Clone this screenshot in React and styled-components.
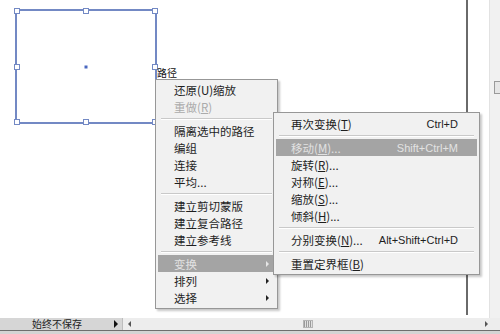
import React from 'react'
import styled, { createGlobalStyle } from 'styled-components'

const Global = createGlobalStyle`
  html, body { margin: 0; padding: 0; background: #fff; }
  body { font-family: "Noto Sans CJK SC", "Liberation Sans", sans-serif; }
`

const Page = styled.div`
  width: 500px;
  height: 334px;
  overflow: hidden;
  display: flex;
  flex-direction: column;
  background: #fff;
`

const Workspace = styled.div`
  position: relative;
  height: 318px;
  display: flex;
`

const Artboard = styled.div`
  position: relative;
  width: 466px;
  height: 315px;
  border-right: 2px solid #6a6a6a;
`

const Gutter = styled.div`
  flex: 1;
  background: #fff;
`

const RightStrip = styled.div`
  width: 10px;
  background: #f1f1f1;
  border-left: 1px solid #e2e2e2;
  display: flex;
  flex-direction: column;
  padding-top: 81px;
`

const StripBox = styled.div`
  width: 6px;
  height: 11px;
  margin-left: 4px;
  border: 1px solid #9a9a9a;
  border-right: none;
  background: #e6e6e6;
`

const Selection = styled.div`
  position: absolute;
  left: 15px;
  top: 9px;
  width: 142px;
  height: 115px;
  border: 2px solid #7389c4;
  box-sizing: border-box;
`

const Handle = styled.span`
  position: absolute;
  width: 6px;
  height: 6px;
  background: #fff;
  border: 1px solid #7389c4;
  box-sizing: border-box;
  left: ${p => p.$x}%;
  top: ${p => p.$y}%;
  transform: translate(-50%, -50%);
`

const CenterDot = styled.span`
  position: absolute;
  left: 50%;
  top: 50%;
  width: 3px;
  height: 3px;
  background: #4a68c0;
  transform: translate(-50%, -50%);
`

const PathLabel = styled.span`
  position: absolute;
  left: 157px;
  top: 66px;
  font-size: 10px;
  color: #111;
  line-height: 14px;
`

const Menu = styled.div`
  position: absolute;
  left: ${p => p.$left}px;
  top: ${p => p.$top}px;
  width: ${p => p.$width}px;
  box-sizing: border-box;
  padding: ${p => p.$pad}px 2px 2px 2px;
  background: #f1f1f1;
  border: 1px solid #979797;
  box-shadow: 2px 2px 2px rgba(0, 0, 0, 0.22);
  z-index: ${p => p.$z};
`

const Item = styled.div`
  height: 17px;
  display: flex;
  align-items: center;
  padding-left: ${p => p.$indent}px;
  padding-right: ${p => p.$right}px;
  font-size: 11.5px;
  color: ${p => (p.$disabled ? '#ababab' : p.$active ? '#e2e2e2' : '#1e1e1e')};
  background: ${p => (p.$active ? '#a4a4a4' : 'transparent')};
  white-space: nowrap;
  u { text-underline-offset: 1px; }
`

const Label = styled.span`
  flex: 1;
`

const Shortcut = styled.span`
  font-family: "Liberation Sans", "DejaVu Sans", sans-serif;
  font-size: 11px;
`

const Arrow = styled.span`
  width: 0;
  height: 0;
  border-top: 3px solid transparent;
  border-bottom: 3px solid transparent;
  border-left: 3px solid ${p => (p.$light ? '#e6e6e6' : '#222')};
`

const Separator = styled.div`
  height: 7px;
  display: flex;
  align-items: center;
  padding: 0 3px;
  &::after {
    content: '';
    flex: 1;
    height: 1px;
    background: #c9c9c9;
    box-shadow: 0 1px 0 #fff;
  }
`

const StatusBar = styled.div`
  height: 12px;
  display: flex;
  align-items: center;
  background: #ededed;
  border-bottom: 1px solid #6e6e6e;
`

const StatusBox = styled.div`
  width: 86px;
  height: 100%;
  display: flex;
  align-items: center;
  padding-left: 32px;
  padding-right: 4px;
  background: #d6d6d6;
  border-right: 1px solid #bdbdbd;
  font-size: 10px;
  color: #222;
`

const StatusText = styled.span`
  flex: 1;
  line-height: 12px;
`

const ScrollTrack = styled.div`
  flex: 1;
  height: 100%;
  display: flex;
  align-items: center;
  justify-content: space-between;
  padding: 0 12px 0 5px;
`

const Tri = styled.span`
  width: 0;
  height: 0;
  border-top: ${p => p.$s}px solid transparent;
  border-bottom: ${p => p.$s}px solid transparent;
  ${p => (p.$left ? `border-right: ${p.$s}px solid ${p.$c};` : `border-left: ${p.$s}px solid ${p.$c};`)}
`

const Grip = styled.span`
  width: 10px;
  height: 8px;
  border: 1px solid #b5b5b5;
  background: repeating-linear-gradient(90deg, #9a9a9a 0 1px, #e0e0e0 1px 2px);
  box-sizing: border-box;
`

const BottomEdge = styled.div`
  flex: 1;
  background: #d4d4d4;
`

const handles = [
  [0, 0], [50, 0], [100, 0],
  [0, 50], [100, 50],
  [0, 100], [50, 100], [100, 100],
]

const mainItems = [
  { t: <>还原(U)缩放</> },
  { t: <>重做(<u>R</u>)</>, disabled: true },
  'sep',
  { t: '隔离选中的路径' },
  { t: '编组' },
  { t: '连接' },
  { t: '平均...' },
  'sep',
  { t: '建立剪切蒙版' },
  { t: '建立复合路径' },
  { t: '建立参考线' },
  'sep',
  { t: '变换', sub: true, active: true },
  { t: '排列', sub: true },
  { t: '选择', sub: true },
]

const subItems = [
  { t: <>再次变换(<u>T</u>)</>, k: 'Ctrl+D' },
  'sep',
  { t: <>移动(<u>M</u>)...</>, k: 'Shift+Ctrl+M', active: true },
  { t: <>旋转(<u>R</u>)...</> },
  { t: <>对称(<u>E</u>)...</> },
  { t: <>缩放(<u>S</u>)...</> },
  { t: <>倾斜(<u>H</u>)...</> },
  'sep',
  { t: <>分别变换(<u>N</u>)...</>, k: 'Alt+Shift+Ctrl+D' },
  'sep',
  { t: <>重置定界框(<u>B</u>)</> },
]

function MenuList({ items, indent, right }) {
  return items.map((it, i) =>
    it === 'sep' ? (
      <Separator key={i} />
    ) : (
      <Item key={i} $indent={indent} $right={right} $disabled={it.disabled} $active={it.active}>
        <Label>{it.t}</Label>
        {it.k && <Shortcut>{it.k}</Shortcut>}
        {it.sub && <Arrow $light={it.active} />}
      </Item>
    )
  )
}

export default function App() {
  return (
    <Page>
      <Global />
      <Workspace>
        <Artboard>
          <Selection>
            {handles.map(([x, y], i) => (
              <Handle key={i} $x={x} $y={y} />
            ))}
            <CenterDot />
          </Selection>
          <PathLabel>路径</PathLabel>
        </Artboard>
        <Gutter />
        <RightStrip>
          <StripBox />
        </RightStrip>

        <Menu $left={155} $top={79} $width={123} $pad={1} $z={1}>
          <MenuList items={mainItems} indent={16} right={6} />
        </Menu>
        <Menu $left={273} $top={112} $width={207} $pad={2} $z={2}>
          <MenuList items={subItems} indent={15} right={19} />
        </Menu>
      </Workspace>
      <StatusBar>
        <StatusBox>
          <StatusText>始终不保存</StatusText>
          <Tri $s={4} $c="#111" />
        </StatusBox>
        <ScrollTrack>
          <Tri $s={3} $c="#555" $left />
          <Grip />
          <Tri $s={3} $c="#555" />
        </ScrollTrack>
      </StatusBar>
      <BottomEdge />
    </Page>
  )
}
